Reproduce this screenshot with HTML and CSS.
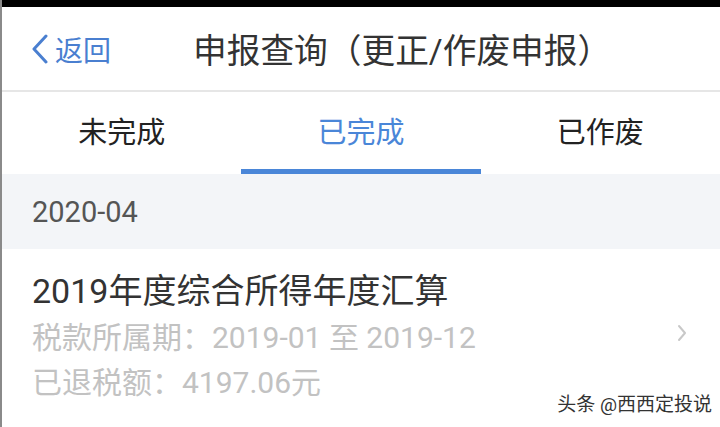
FILE: index.html
```html
<!DOCTYPE html>
<html lang="zh-CN">
  <head>
    <meta charset="UTF-8" />
    <meta name="viewport" content="width=device-width, initial-scale=1.0" />
    <title>申报查询</title>
    <link rel="stylesheet" href="styles.css">
  </head>
  <body>
    <div class="statusbar"></div>
    <div class="header">
      <a class="back">
        <svg width="20" height="30" viewBox="0 0 20 30"><path d="M16 2 L4 15 L16 28" fill="none" stroke="#4a7fd0" stroke-width="3" stroke-linecap="round" stroke-linejoin="round"/></svg>
        <span>返回</span>
      </a>
      <h1>申报查询（更正/作废申报）</h1>
    </div>
    <div class="tabs">
      <div class="tab">未完成</div>
      <div class="tab active">已完成</div>
      <div class="tab">已作废</div>
    </div>
    <div class="month">2020-04</div>
    <div class="item">
      <div class="info">
        <h3>2019年度综合所得年度汇算</h3>
        <p>税款所属期：2019-01 至 2019-12</p>
        <p>已退税额：4197.06元</p>
      </div>
      <svg class="arrow" width="12" height="20" viewBox="0 0 12 20"><path d="M3 3 L9 10 L3 17" fill="none" stroke="#c8c8c8" stroke-width="2" stroke-linecap="round" stroke-linejoin="round"/></svg>
    </div>
    <div class="mark">头条 @西西定投说</div>
  </body>
</html>
```

FILE: styles.css
```css
* {
  margin: 0;
  padding: 0;
  box-sizing: border-box;
}
body {
  width: 720px;
  height: 427px;
  overflow: hidden;
  background: #fff;
  font-family: Roboto, "Noto Sans CJK SC", sans-serif;
  position: relative;
  border-left: 2px solid #8a8a8a;
}
.statusbar {
  height: 7px;
  background: #000;
}
.header {
  height: 85px;
  display: flex;
  align-items: center;
  padding-left: 28px;
  border-bottom: 2px solid #e6e6e6;
}
.back {
  display: flex;
  align-items: center;
  gap: 5px;
  color: #4a7fd0;
  font-size: 28px;
  width: 163px;
}
.header h1 {
  font-weight: normal;
  font-size: 33.7px;
  color: #333;
}
.tabs {
  display: flex;
  height: 82px;
}
.tab {
  flex: 1;
  display: flex;
  align-items: center;
  justify-content: center;
  font-size: 29px;
  color: #222;
  padding-bottom: 2px;
  border-bottom: 5px solid transparent;
}
.tab.active {
  color: #4a86d8;
  border-bottom-color: #4a86d8;
}
.month {
  height: 75px;
  background: #f3f5f8;
  padding-left: 30px;
  display: flex;
  align-items: center;
  font-size: 29px;
  color: #555;
}
.item {
  display: flex;
  align-items: center;
  padding: 18px 32px 0 30px;
}
.info {
  flex: 1;
}
.item h3 {
  font-weight: normal;
  font-size: 34px;
  color: #333;
  line-height: 48px;
}
.item p {
  font-size: 30px;
  color: #c2c2c2;
  line-height: 45px;
}
.arrow {
  margin-top: -6px;
}
.mark {
  position: absolute;
  right: 8px;
  bottom: 11px;
  font-size: 19px;
  color: #333;
  text-shadow: 0 0 2px #fff;
}
```
